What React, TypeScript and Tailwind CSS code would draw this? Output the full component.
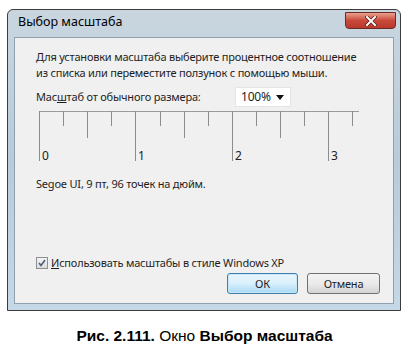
import React from "react";

const ticks = Array.from({ length: 14 }, (_, i) => i);

const Ruler = () => (
  <svg width="340" height="60" viewBox="0 0 340 60" className="block">
    <line x1="0" y1="0.5" x2="320" y2="0.5" stroke="#9a9a9a" />
    {ticks.map((i) => {
      const x = 0.5 + Math.round(i * 24.1);
      const h = i % 4 === 0 ? 50 : i % 2 === 0 ? 27 : 15;
      return <line key={i} x1={x} y1="0" x2={x} y2={h} stroke="#8c8c8c" />;
    })}
    {["0", "1", "2", "3"].map((t, i) => (
      <text
        key={t}
        x={Math.round(i * 96.4) + 3}
        y="49"
        fontSize="12"
        fontFamily="Noto Sans, sans-serif"
        fill="#222"
      >
        {t}
      </text>
    ))}
  </svg>
);

export default function App() {
  return (
    <div className="w-[409px] h-[344px] bg-white pt-[9px] font-['Noto_Sans',sans-serif]">
      <div className="ml-[7px] w-[394px] h-[302px] rounded-t-[6px] border border-[#3c3c3c] bg-gradient-to-b from-[#c9d6e0] via-[#b8cbd9] to-[#c4d8e6] flex flex-col">
        <div className="h-[27px] flex items-start justify-between pl-[10px] pr-[4px]">
          <span className="mt-[6px] text-[12.5px] text-black leading-none">Выбор масштаба</span>
          <div className="mt-[2px] w-[51px] h-[17px] rounded-b-[4px] border border-[#6b2a24] bg-gradient-to-b from-[#e8a08f] via-[#c9483a] to-[#b83a2c] flex items-center justify-center">
            <svg width="12" height="10" viewBox="0 0 12 10">
              <path d="M2 1 L10 9 M10 1 L2 9" stroke="#5a1a14" strokeWidth="3.4" strokeLinecap="square" />
              <path d="M2 1 L10 9 M10 1 L2 9" stroke="#ffffff" strokeWidth="2" strokeLinecap="square" />
            </svg>
          </div>
        </div>
        <div className="mx-[6px] mb-[6px] flex-1 border border-[#8fa0ae] bg-[#f0f0f0] flex flex-col pl-[21px] pr-[12px] text-[11px] text-[#1e1e1e] leading-[16px] tracking-[-0.2px] whitespace-nowrap">
          <p className="mt-[11px]">
            Для установки масштаба выберите процентное соотношение
            <br />
            из списка или переместите ползунок с помощью мыши.
          </p>
          <div className="mt-[6px] flex items-center">
            <span className="w-[199px]">
              Мас<span className="underline">ш</span>таб от обычного размера:
            </span>
            <div className="w-[56px] h-[20px] bg-white border border-[#e4e4e4] flex items-center pl-[5px] pr-[6px] justify-between">
              <span className="text-[12px]">100%</span>
              <svg width="8" height="5" viewBox="0 0 8 5">
                <path d="M0 0 H8 L4 5 Z" fill="#111" />
              </svg>
            </div>
          </div>
          <div className="mt-[4px] ml-[3px]">
            <Ruler />
          </div>
          <p className="mt-[5px]">Segoe UI, 9 пт, 96 точек на дюйм.</p>
          <div className="mt-auto flex items-center gap-[3px]">
            <div className="w-[12px] h-[12px] border border-[#8e8f8f] bg-gradient-to-b from-[#f4f4f4] to-[#dcdcdc] flex items-center justify-center">
              <svg width="8" height="8" viewBox="0 0 8 8">
                <path d="M1 4 L3 6.5 L7 1" stroke="#4a5f80" strokeWidth="1.6" fill="none" />
              </svg>
            </div>
            <span>
              <span className="underline">И</span>спользовать масштабы в стиле Windows XP
            </span>
          </div>
          <div className="mt-[2px] mb-[9px] flex justify-end gap-[9px] pr-[1px]">
            <button className="w-[71px] h-[21px] rounded-[3px] border border-[#3c7fb1] bg-gradient-to-b from-[#eaf6fd] via-[#d9f0fc] to-[#a7d9f5] text-[11px] text-[#1e1e1e] shadow-[inset_0_0_0_1px_#c8e8f8]">
              ОК
            </button>
            <button className="w-[73px] h-[21px] rounded-[3px] border border-[#707070] bg-gradient-to-b from-[#f2f2f2] via-[#ebebeb] to-[#d4d4d4] text-[11px] text-[#1e1e1e]">
              Отмена
            </button>
          </div>
        </div>
      </div>
      <div className="mt-[13px] text-center text-[15.5px] text-black font-['Liberation_Sans',Arial,sans-serif]">
        <span className="font-bold">Рис. 2.111.</span> Окно <span className="font-bold">Выбор масштаба</span>
      </div>
    </div>
  );
}
